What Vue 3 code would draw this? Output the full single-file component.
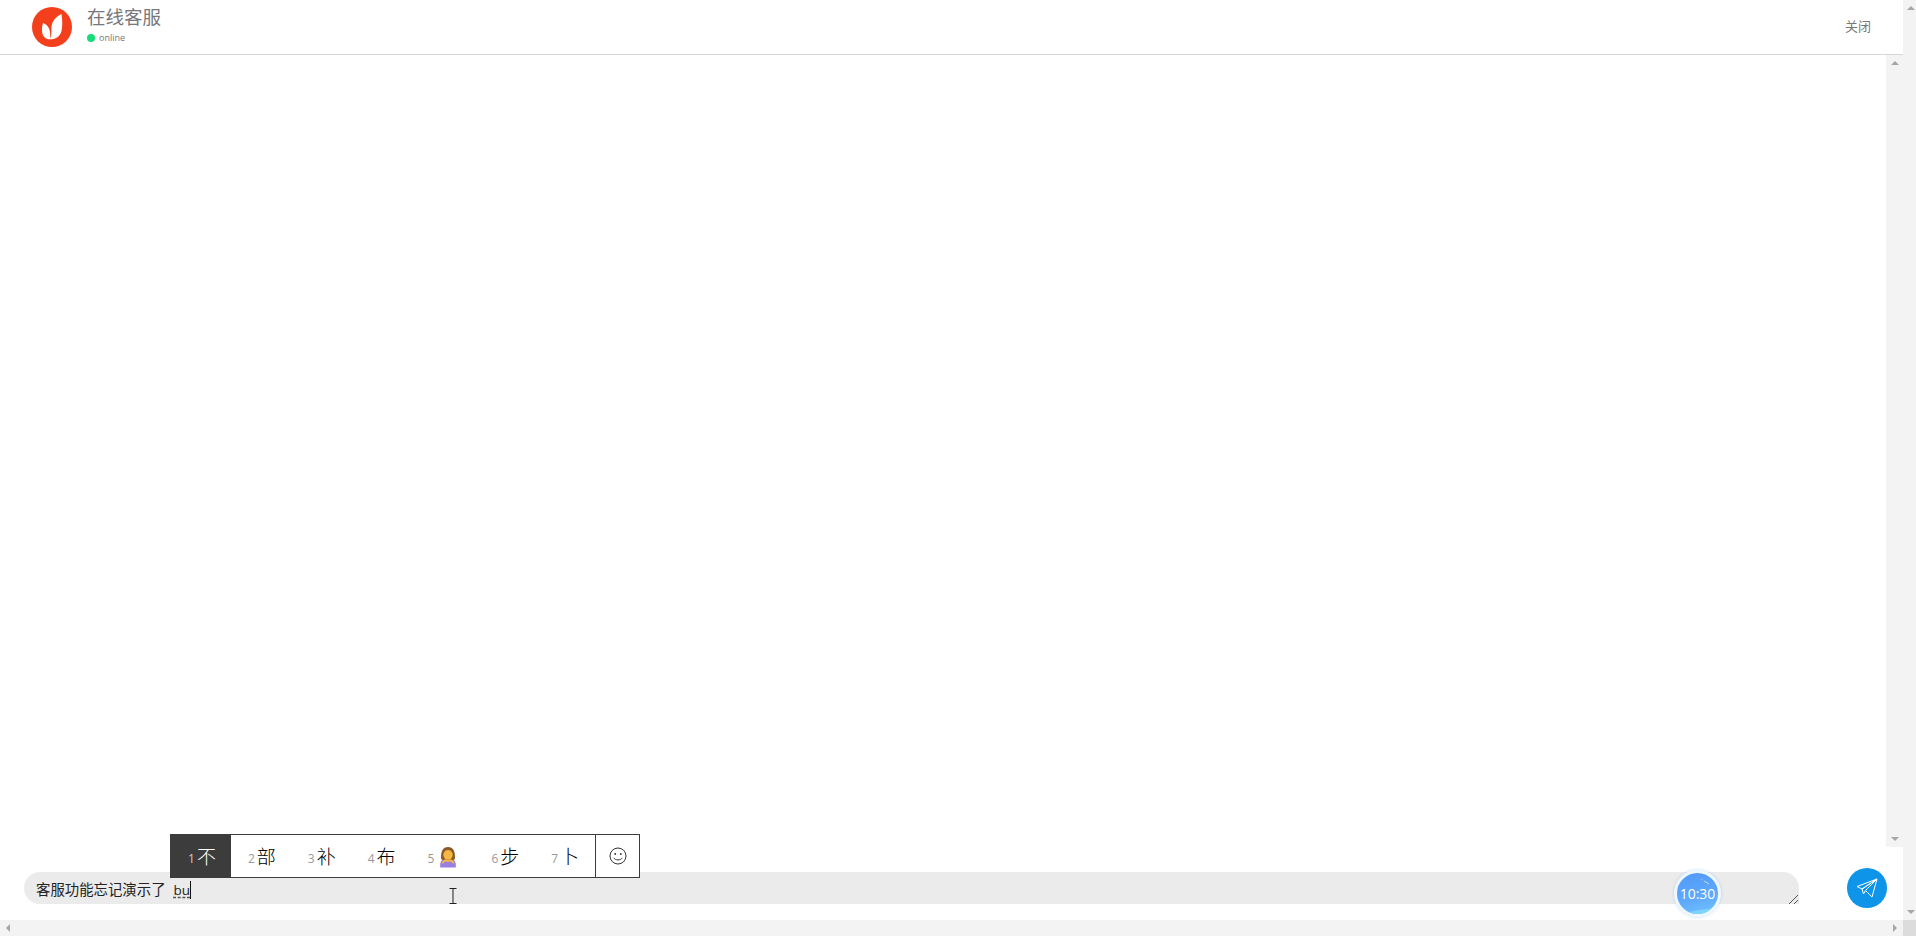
<template>
  <div class="page">
    <div class="main">
      <header class="head">
        <svg class="logo" viewBox="0 0 40 40" width="40" height="40">
          <circle cx="20" cy="20" r="20" fill="#f43f1c" />
          <path d="M29.500 7C24 9.500 20 14 19.500 20C19.300 25 20 29 17.500 32.300C24 32.500 28 29.500 29.500 24C30.500 19 30.500 13 29.500 7Z" fill="#fff" />
          <path d="M11 16C10 19 9.500 23 10.500 27C11.500 30 14 32.300 18 32.300C18.500 29 18.300 25 17.300 22C16 19 14 17 11 16Z" fill="#fff" />
        </svg>
        <div class="who">
          <div class="title">在线客服</div>
          <div class="status"><i class="dot"></i>online</div>
        </div>
        <span class="close">关闭</span>
      </header>

      <div class="body">
        <div class="msgs"></div>
        <div class="vbar inner">
          <i class="arr up"></i>
          <i class="arr down"></i>
        </div>
      </div>

      <footer class="foot">
        <div class="inputbox">
          <span class="typed">客服功能忘记演示了</span>
          <span class="comp">bu</span>

          <div class="ime">
            <div
              v-for="(c, i) in candidates"
              :key="i"
              class="cand"
              :class="[{ on: i === 0 }, c.cls]"
            >
              <span class="num">{{ i + 1 }}</span>
              <svg v-if="c.emoji" class="emoji" viewBox="0 0 18 20" width="20" height="22">
                <path d="M2 19.500c-.6-4 .6-7 3.500-8h7c2.900 1 4.100 4 3.500 8z" fill="#9b7fe0" />
                <path d="M2.800 12C2 5 4.500 1 9 1s7 4 6.200 11L13 13H5z" fill="#8a5a2b" />
                <circle cx="9" cy="8" r="4.300" fill="#f5b642" />
                <path d="M3.800 15.500c1.700-2.300 3.600-3.300 5.200-1.700c1.600-1.600 3.500-.6 5.200 1.700" fill="none" stroke="#f5b642" stroke-width="1.800" />
              </svg>
              <span v-else class="ch">{{ c.ch }}</span>
            </div>
            <div class="smile">
              <svg viewBox="0 0 18 18" width="18" height="18" fill="none" stroke="#333" stroke-width="1">
                <circle cx="9" cy="9" r="8" />
                <circle cx="6.200" cy="7" r=".9" fill="#333" stroke="none" />
                <circle cx="11.800" cy="7" r=".9" fill="#333" stroke="none" />
                <path d="M4.800 10.800C6 13.600 12 13.600 13.200 10.800" />
              </svg>
            </div>
          </div>

          <svg class="ibeam" viewBox="0 0 8 16" width="8" height="16" fill="none" stroke="#222" stroke-width="1">
            <path d="M.5.500h7M4 .5v15M.5 15.500h7" />
          </svg>

          <div class="clock">
            <svg class="shine" viewBox="0 0 41 41" width="41" height="41" fill="none">
              <path d="M0 41H41V34C30 37 18 36 8 41Z" fill="#7fd4ff" />
              <path d="M27 8l5 3M24.500 6.500l1 .5" stroke="#dcecff" stroke-width=".8" />
            </svg>
            <span>10:30</span>
          </div>

          <svg class="grip" viewBox="0 0 9 9" width="9" height="9" stroke="#555" stroke-width="1">
            <path d="M0 9L9 0M5 9L9 5" />
          </svg>
        </div>

        <button class="send">
          <svg viewBox="0 0 22 20" width="22" height="20" fill="none" stroke="#fff" stroke-width="1" stroke-linejoin="round">
            <path d="M21 1L1 8.500l5 2.500zM21 1L6 11l1.500 5 2-3.500zM21 1l-5 18-6.500-6.500" />
          </svg>
        </button>
      </footer>
    </div>

    <div class="vbar outer">
      <i class="arr up"></i>
      <i class="arr down"></i>
    </div>
    <div class="hbar">
      <i class="arr left"></i>
      <i class="arr right"></i>
    </div>
    <div class="corner"></div>
  </div>
</template>

<script setup>
const candidates = [
  { ch: '不', cls: 'c1' },
  { ch: '部', cls: 'c2' },
  { ch: '补', cls: 'c3' },
  { ch: '布', cls: 'c4' },
  { emoji: true, cls: 'c5' },
  { ch: '步', cls: 'c6' },
  { ch: '卜', cls: 'c7' }
]
</script>

<style>
html,
body {
  margin: 0;
  overflow: hidden;
  background: #fff;
}
</style>

<style scoped>
.page {
  width: 1916px;
  height: 936px;
  display: grid;
  grid-template-columns: 1903px 13px;
  grid-template-rows: 920px 16px;
  overflow: hidden;
  font-family: "Open Sans", "Noto Sans CJK SC", sans-serif;
}
.main {
  display: flex;
  flex-direction: column;
  min-height: 0;
}
.head {
  height: 54px;
  flex: none;
  display: flex;
  align-items: center;
  padding: 0 32px;
  border-bottom: 1px solid #d6d6d6;
  background: #fff;
}
.logo {
  flex: none;
  margin-top: -1px;
}
.who {
  margin-left: 15px;
  flex: 1;
  margin-top: -5px;
}
.title {
  font-size: 18.500px;
  line-height: 26px;
  color: #77777c;
}
.status {
  display: flex;
  align-items: center;
  font-size: 9px;
  line-height: 14px;
  color: #777;
  margin-top: 1px;
}
.dot {
  width: 8px;
  height: 8px;
  border-radius: 50%;
  background: #14dc78;
  margin-right: 4px;
}
.close {
  font-size: 13px;
  color: #777;
  margin-top: -4px;
}
.body {
  flex: 1;
  display: flex;
  min-height: 0;
}
.msgs {
  flex: 1;
}
.vbar {
  background: #f3f3f3;
  display: flex;
  flex-direction: column;
  justify-content: space-between;
  align-items: center;
}
.vbar.inner {
  width: 17px;
  padding: 6px 0;
  box-sizing: border-box;
}
.vbar.outer {
  padding: 6px 0;
  box-sizing: border-box;
  align-items: flex-start;
}
.vbar.outer .arr {
  margin-left: 4px;
}
.arr {
  display: block;
  width: 0;
  height: 0;
  border: 4px solid transparent;
}
.arr.up {
  border-top: 0;
  border-bottom: 4px solid #a6a6a6;
}
.arr.down {
  border-bottom: 0;
  border-top: 4px solid #a6a6a6;
}
.arr.left {
  border-left: 0;
  border-right: 4px solid #a6a6a6;
}
.arr.right {
  border-right: 0;
  border-left: 4px solid #a6a6a6;
}
.hbar {
  background: #f3f3f3;
  display: flex;
  align-items: center;
  justify-content: space-between;
  padding: 0 6px;
}
.corner {
  background: #dcdcdc;
}
.foot {
  height: 73px;
  flex: none;
  display: flex;
  align-items: flex-start;
  gap: 48px;
  padding: 21px 16px 0 24px;
  box-sizing: border-box;
}
.inputbox {
  flex: 1;
  height: 32px;
  margin-top: 4px;
  position: relative;
  background: #ebebeb;
  border-radius: 16px 16px 0 16px;
  padding-left: 12px;
  font-size: 14.400px;
  line-height: 35px;
  color: #222;
  white-space: nowrap;
}
.typed {
  margin-right: 8px;
}
.comp {
  font-family: "Open Sans", sans-serif;
  font-size: 13.500px;
  text-decoration: underline dashed #555;
  text-underline-offset: 2px;
  border-right: 1px solid #111;
}
.ime {
  position: absolute;
  left: 146px;
  top: -38px;
  height: 44px;
  display: flex;
  background: #fff;
  border: 1px solid #3c3c3c;
  border-left: 0;
  box-sizing: border-box;
  line-height: 1;
}
.cand {
  display: flex;
  align-items: center;
  gap: 2px;
  padding: 2px 16px 0;
  font-size: 19px;
  font-weight: 300;
  line-height: 1;
  color: #000;
}
.cand.on {
  background: #3c3c3c;
  color: #fff;
  padding: 2px 15px 0 18px;
  margin-top: -1px;
  margin-bottom: -1px;
}
.cand.c1 .num {
  color: #ccc;
}
.cand.c2 {
  margin-left: 1px;
}
.cand.c5 {
  gap: 4px;
  padding-right: 17px;
}
.num {
  font-size: 12px;
  font-weight: 400;
  color: #999;
  padding-top: 3px;
}
.smile {
  width: 44px;
  box-sizing: border-box;
  display: flex;
  align-items: center;
  justify-content: center;
  border-left: 1px solid #3c3c3c;
}
.ibeam {
  position: absolute;
  left: 425px;
  top: 16px;
}
.clock {
  position: absolute;
  left: 1650px;
  top: -2px;
  width: 41px;
  height: 41px;
  border-radius: 50%;
  border: 3px solid #eef7fd;
  box-shadow: 0 0 3px rgba(120, 180, 230, 0.5);
  background: linear-gradient(165deg, #5098f8, #60aafc 60%, #70c4ff);
  overflow: hidden;
  display: flex;
  align-items: center;
  justify-content: center;
  color: #fff;
  font-size: 14px;
  line-height: 1;
}
.clock span {
  position: relative;
}
.shine {
  position: absolute;
  left: 0;
  top: 0;
}
.grip {
  position: absolute;
  right: 1px;
  bottom: 0;
}
.send {
  width: 40px;
  height: 40px;
  flex: none;
  border: 0;
  padding: 0;
  border-radius: 50%;
  background: #0e94e8;
  display: flex;
  align-items: center;
  justify-content: center;
}
</style>
